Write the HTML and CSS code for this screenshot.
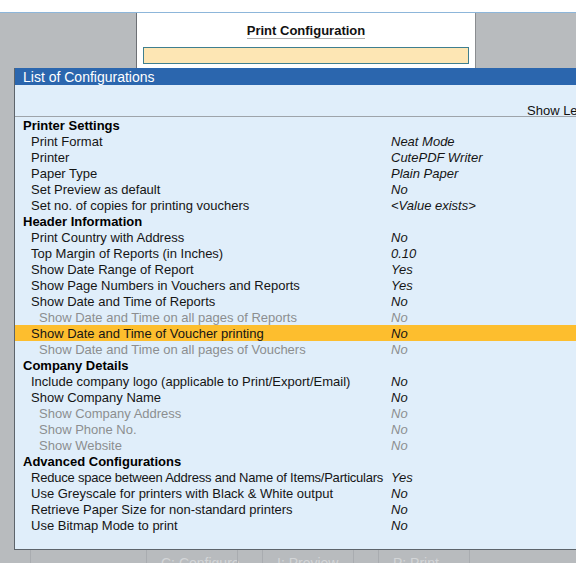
FILE: index.html
```html
<!DOCTYPE html>
<html>
<head>
<meta charset="utf-8">
<link rel="stylesheet" href="styles.css">
</head>
<body>
<div class="top"></div>
<div class="app">
  <div class="panel">
    <div class="ptitle"><span>Print Configuration</span></div>
    <div class="pinput"></div>
  </div>
  <div class="dialog">
    <div class="dtitle">List of Configurations</div>
    <div class="dbody">
      <div class="showrow">Show Le</div>
      <div class="list">
        <div class="row sec"><span class="lbl">Printer Settings</span></div>
        <div class="row item"><span class="lbl">Print Format</span><span class="val">Neat Mode</span></div>
        <div class="row item"><span class="lbl">Printer</span><span class="val">CutePDF Writer</span></div>
        <div class="row item"><span class="lbl">Paper Type</span><span class="val">Plain Paper</span></div>
        <div class="row item"><span class="lbl">Set Preview as default</span><span class="val">No</span></div>
        <div class="row item"><span class="lbl">Set no. of copies for printing vouchers</span><span class="val">&lt;Value exists&gt;</span></div>
        <div class="row sec"><span class="lbl">Header Information</span></div>
        <div class="row item"><span class="lbl">Print Country with Address</span><span class="val">No</span></div>
        <div class="row item"><span class="lbl">Top Margin of Reports (in Inches)</span><span class="val">0.10</span></div>
        <div class="row item"><span class="lbl">Show Date Range of Report</span><span class="val">Yes</span></div>
        <div class="row item"><span class="lbl">Show Page Numbers in Vouchers and Reports</span><span class="val">Yes</span></div>
        <div class="row item"><span class="lbl">Show Date and Time of Reports</span><span class="val">No</span></div>
        <div class="row sub"><span class="lbl">Show Date and Time on all pages of Reports</span><span class="val">No</span></div>
        <div class="row item active"><span class="lbl">Show Date and Time of Voucher printing</span><span class="val">No</span></div>
        <div class="row sub"><span class="lbl">Show Date and Time on all pages of Vouchers</span><span class="val">No</span></div>
        <div class="row sec"><span class="lbl">Company Details</span></div>
        <div class="row item"><span class="lbl">Include company logo (applicable to Print/Export/Email)</span><span class="val">No</span></div>
        <div class="row item"><span class="lbl">Show Company Name</span><span class="val">No</span></div>
        <div class="row sub"><span class="lbl">Show Company Address</span><span class="val">No</span></div>
        <div class="row sub"><span class="lbl">Show Phone No.</span><span class="val">No</span></div>
        <div class="row sub"><span class="lbl">Show Website</span><span class="val">No</span></div>
        <div class="row sec"><span class="lbl">Advanced Configurations</span></div>
        <div class="row item"><span class="lbl tight">Reduce space between Address and Name of Items/Particulars</span><span class="val">Yes</span></div>
        <div class="row item"><span class="lbl">Use Greyscale for printers with Black &amp; White output</span><span class="val">No</span></div>
        <div class="row item"><span class="lbl">Retrieve Paper Size for non-standard printers</span><span class="val">No</span></div>
        <div class="row item"><span class="lbl">Use Bitmap Mode to print</span><span class="val">No</span></div>
      </div>
    </div>
  </div>
  <div class="buttons">
    <div class="btn b0"></div>
    <div class="btn b1">C: Configure</div>
    <div class="btn gap"></div>
    <div class="btn b1">I: Preview</div>
    <div class="btn gap"></div>
    <div class="btn b1">P: Print</div>
    <div class="btn rest"></div>
  </div>
</div>
<div class="bottom"></div>
</body>
</html>
```

FILE: styles.css
```css
html, body {
  margin: 0;
  padding: 0;
  background: #ffffff;
  overflow: hidden;
  width: 576px;
  height: 576px;
  font-family: "Liberation Sans", Arial, sans-serif;
}
.top {
  height: 12px;
  background: #ffffff;
}
.app {
  border-top: 1px solid #8db6da;
  background: #b8bbbe;
  height: 550px;
  overflow: hidden;
  width: 576px;
}
.panel {
  margin-left: 136px;
  width: 340px;
  height: 55px;
  box-sizing: border-box;
  background: #ffffff;
  border-left: 1px solid #6d7075;
  border-right: 1px solid #8a8d90;
}
.ptitle {
  padding-top: 9px;
  text-align: center;
  line-height: 16px;
  height: 17px;
}
.ptitle span {
  display: inline-block;
  font-weight: bold;
  font-size: 13px;
  color: #111;
  border-bottom: 1px solid #b0b0b0;
  line-height: 15px;
}
.pinput {
  margin-top: 8px;
  margin-left: 6px;
  width: 326px;
  height: 17px;
  box-sizing: border-box;
  background: #fde6b4;
  border: 1px solid #3f7f8f;
}
.dialog {
  margin-left: 14px;
  width: 620px;
  height: 482px;
  box-sizing: border-box;
  border-left: 1px solid #5d646b;
  border-bottom: 1px solid #5d646b;
  background: #e0eefa;
}
.dtitle {
  height: 17px;
  box-sizing: border-box;
  padding-top: 1px;
  background: #2b66ae;
  color: #ffffff;
  font-size: 14px;
  line-height: 16px;
  padding-left: 8px;
}
.showrow {
  height: 32px;
  box-sizing: border-box;
  padding-top: 18px;
  padding-left: 512px;
  font-size: 13px;
  line-height: 16px;
  color: #111;
  border-bottom: 1px solid #9ea4aa;
  white-space: nowrap;
}
.list {
  display: flex;
  flex-direction: column;
}
.row {
  display: flex;
  height: 16px;
  box-sizing: border-box;
  padding-top: 1px;
  line-height: 16px;
  font-size: 13px;
  white-space: nowrap;
  color: #151515;
}
.lbl {
  width: 376px;
  box-sizing: border-box;
  padding-left: 16px;
  flex: none;
}
.tight {
  letter-spacing: -0.22px;
}
.val {
  font-style: italic;
}
.sec .lbl {
  padding-left: 8px;
  font-weight: bold;
  color: #000;
}
.sub {
  color: #8c8e90;
}
.sub .lbl {
  padding-left: 24px;
}
.active {
  background: #fdbe2e;
}
.buttons {
  display: flex;
  height: 13px;
  overflow: hidden;
  padding-left: 30px;
}
.btn {
  box-sizing: border-box;
  height: 20px;
  border-left: 1px solid #a9acb0;
  color: #d3d5d7;
  font-size: 14px;
  line-height: 20px;
  padding-top: 3px;
  padding-left: 14px;
  white-space: nowrap;
  flex: none;
}
.b0 { width: 116px; }
.b1 { width: 91px; }
.gap { width: 25px; }
.rest { width: 110px; }
.bottom {
  height: 13px;
  background: #ffffff;
}
```
